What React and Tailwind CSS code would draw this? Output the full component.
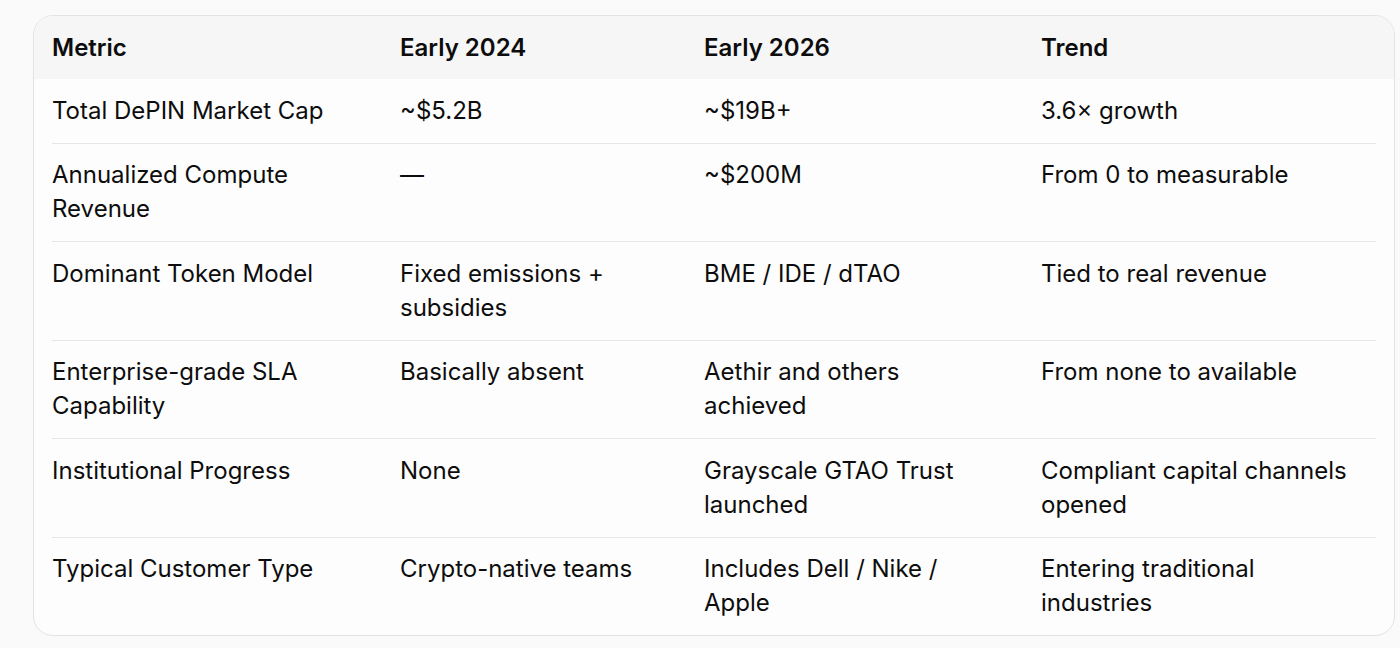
import React from 'react';

const rows = [
  ['Total DePIN Market Cap', '~$5.2B', '~$19B+', '3.6× growth'],
  ['Annualized Compute Revenue', '—', '~$200M', 'From 0 to measurable'],
  ['Dominant Token Model', 'Fixed emissions + subsidies', 'BME / IDE / dTAO', 'Tied to real revenue'],
  ['Enterprise-grade SLA Capability', 'Basically absent', 'Aethir and others achieved', 'From none to available'],
  ['Institutional Progress', 'None', 'Grayscale GTAO Trust launched', 'Compliant capital channels opened'],
  ['Typical Customer Type', 'Crypto-native teams', 'Includes Dell / Nike / Apple', 'Entering traditional industries'],
];

const cols = 'grid grid-cols-[348px_304px_337px_1fr]';

function App() {
  return (
    <div
      className="min-h-screen bg-[#fafafa] pl-[33px] pt-[15px] text-[#0d0d0d]"
      style={{ fontFamily: 'Inter, "Noto Sans", sans-serif' }}
    >
      <div className="w-[1362px] rounded-[20px] border border-[#e3e3e3] bg-[#fdfdfd] overflow-hidden">
        {/* header */}
        <div className={`${cols} bg-[#f6f6f6] px-[18px] py-[14.5px] text-[24px] leading-[34px] font-semibold`}>
          <div>Metric</div>
          <div>Early 2024</div>
          <div>Early 2026</div>
          <div>Trend</div>
        </div>
        {/* body */}
        <div className="px-[18px]">
          {rows.map((r, i) => (
            <div
              key={i}
              className={`${cols} py-[14.75px] text-[24px] leading-[34px] ${
                i < rows.length - 1 ? 'border-b border-[#e6e6e6]' : ''
              }`}
            >
              {r.map((c, j) => (
                <div key={j} className={j === 2 ? 'pr-[40px]' : 'pr-[24px]'}>
                  {c}
                </div>
              ))}
            </div>
          ))}
        </div>
      </div>
    </div>
  );
}

export default App;
